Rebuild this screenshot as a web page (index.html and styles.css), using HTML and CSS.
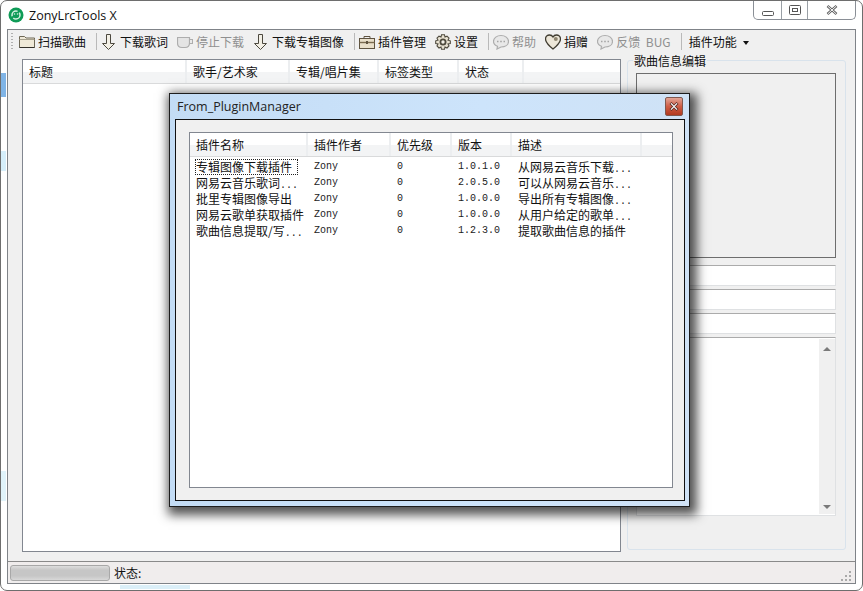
FILE: index.html
```html
<!DOCTYPE html>
<html lang="zh-CN">

<head>
    <meta charset="UTF-8">
    <title>ZonyLrcTools X</title>
    <link rel="stylesheet" href="styles.css">
</head>

<body>
    <div class="janela">
        <div class="titulo">
            <svg class="logo" width="16" height="16" viewBox="0 0 16 16">
                <circle cx="8" cy="8" r="7.5" fill="#0f9b57" />
                <circle cx="8" cy="8" r="4" fill="none" stroke="#d8f2e2" stroke-width="1.5" stroke-dasharray="9 2" />
                <circle cx="6.5" cy="7" r=".8" fill="#d8f2e2" />
                <circle cx="9.5" cy="7" r=".8" fill="#d8f2e2" />
            </svg>
            <span class="titulo-texto">ZonyLrcTools X</span>
            <div class="controles">
                <span class="controle ctl-min"><svg width="12" height="5" viewBox="0 0 12 5">
                        <rect x=".5" y=".5" width="11" height="4" rx="1" fill="#fff" stroke="#555" />
                    </svg></span>
                <span class="controle ctl-max"><svg width="12" height="10" viewBox="0 0 12 10">
                        <rect x=".5" y=".5" width="11" height="9" rx="1" fill="#fff" stroke="#555" />
                        <rect x="3.5" y="3.5" width="5" height="3" fill="#fff" stroke="#555" />
                    </svg></span>
                <span class="controle ctl-fechar"><svg width="12" height="10" viewBox="0 0 12 10">
                        <path d="M1.5 1 L10.5 9 M10.5 1 L1.5 9" stroke="#666" stroke-width="2.6" />
                        <path d="M2 1.3 L10 8.7 M10 1.3 L2 8.7" stroke="#f4f4f4" stroke-width="1" />
                    </svg></span>
            </div>
        </div>

        <div class="cliente">
            <div class="toolbar">
                <span class="grip"></span>
                <span class="item">
                    <svg class="ico" viewBox="0 0 16 16">
                        <path d="M.5 13.5 V2.5 H5.5 L7 4 H15.5 V13.5 Z" fill="#efe9d8" stroke="#6d6755" />
                        <path d="M.5 5.5 H15.5" stroke="#a8a28e" />
                        <path d="M.5 13.5 H15.5" stroke="#33302a" />
                    </svg>
                    扫描歌曲
                </span>
                <span class="sep"></span>
                <span class="item">
                    <svg class="ico" viewBox="0 0 16 16">
                        <path d="M5.5 .5 H9.5 V9.5 H13.5 L7.5 15.5 L1.5 9.5 H5.5 Z" fill="#f3f0e6" stroke="#4c493f" />
                    </svg>
                    下载歌词
                </span>
                <span class="item desativado">
                    <svg class="ico" viewBox="0 0 16 16">
                        <path d="M.5 3.5 H12.5 V9 Q12.5 13.5 8 13.5 H5 Q.5 13.5 .5 9 Z" fill="#e4e4e4" stroke="#adadad" stroke-width="1.2" />
                        <path d="M12.5 5.5 H15.5 V9.5 H12" fill="none" stroke="#adadad" stroke-width="1.2" />
                    </svg>
                    停止下载
                </span>
                <span class="item">
                    <svg class="ico" viewBox="0 0 16 16">
                        <path d="M5.5 .5 H9.5 V9.5 H13.5 L7.5 15.5 L1.5 9.5 H5.5 Z" fill="#f3f0e6" stroke="#4c493f" />
                    </svg>
                    下载专辑图像
                </span>
                <span class="sep"></span>
                <span class="item">
                    <svg class="ico" viewBox="0 0 16 16">
                        <rect x=".5" y="4.5" width="15" height="10" fill="#e9dfca" stroke="#5e5340" />
                        <path d="M.5 8.5 H15.5" stroke="#7a6b50" stroke-width="1.4" />
                        <path d="M5 4.5 V2.5 H11 V4.5" fill="none" stroke="#5e5340" />
                        <rect x="7" y="7" width="2" height="3" fill="#5e5340" />
                    </svg>
                    插件管理
                </span>
                <span class="item">
                    <svg class="ico" viewBox="0 0 16 16">
                        <path d="M6.5 .8 H9.5 L10 3 L12 2.2 L14 4.2 L13 6.2 L15.3 6.8 V9.5 L13 10 L14 12 L12 14 L10 13 L9.5 15.3 H6.5 L6 13 L4 14 L2 12 L3 10 L.7 9.5 V6.8 L3 6.2 L2 4.2 L4 2.2 L6 3 Z" fill="#e8e2d2" stroke="#4f4b3e" stroke-width="1.1" />
                        <circle cx="8" cy="8" r="2.6" fill="#f4f1e8" stroke="#4f4b3e" stroke-width="1.8" />
                    </svg>
                    设置
                </span>
                <span class="sep"></span>
                <span class="item desativado">
                    <svg class="ico" viewBox="0 0 16 16">
                        <path d="M8 1.5 C12 1.5 15.5 3.8 15.5 7.5 C15.5 11 12 13 8 13 L4 15 L4.5 12.3 C2 11.3 .5 9.6 .5 7.5 C.5 3.8 4 1.5 8 1.5 Z" fill="#e8e8e8" stroke="#adadad" stroke-width="1.2" />
                        <path d="M4 7.5 H5.5 M7.2 7.5 H8.8 M10.5 7.5 H12" stroke="#a5a5a5" stroke-width="1.5" />
                    </svg>
                    帮助
                </span>
                <span class="item">
                    <svg class="ico" viewBox="0 0 16 16">
                        <path d="M8 15 C3 11 .5 8 .5 5 C.5 2.5 2.5 1 4.5 1 C6 1 7.3 1.7 8 3 C8.7 1.7 10 1 11.5 1 C13.5 1 15.5 2.5 15.5 5 C15.5 8 13 11 8 15 Z" fill="#ece6d8" stroke="#3f3b30" stroke-width="1.3" />
                        <circle cx="10.8" cy="5" r="2" fill="#8f8671" />
                    </svg>
                    捐赠
                </span>
                <span class="item desativado item-bug">
                    <svg class="ico" viewBox="0 0 16 16">
                        <path d="M8 1.5 C12 1.5 15.5 3.8 15.5 7.5 C15.5 11 12 13 8 13 L4 15 L4.5 12.3 C2 11.3 .5 9.6 .5 7.5 C.5 3.8 4 1.5 8 1.5 Z" fill="#e8e8e8" stroke="#adadad" stroke-width="1.2" />
                        <path d="M4 7.5 H5.5 M7.2 7.5 H8.8 M10.5 7.5 H12" stroke="#a5a5a5" stroke-width="1.5" />
                    </svg>
                    反馈 BUG
                </span>
                <span class="sep"></span>
                <span class="item item-menu">插件功能<span class="seta"></span></span>
            </div>

            <div class="principal">
                <div class="lista lista-musicas">
                    <div class="cabecalho">
                        <span class="col c-titulo">标题</span>
                        <span class="col c-cantor">歌手/艺术家</span>
                        <span class="col c-album">专辑/唱片集</span>
                        <span class="col c-tipo">标签类型</span>
                        <span class="col c-estado">状态</span>
                        <span class="col c-resto"></span>
                    </div>
                </div>

                <div class="grupo">
                    <span class="grupo-legenda">歌曲信息编辑</span>
                    <div class="capa"></div>
                    <div class="campo"></div>
                    <div class="campo"></div>
                    <div class="campo"></div>
                    <div class="letra">
                        <div class="rolagem">
                            <span class="seta-cima"></span>
                            <span class="seta-baixo"></span>
                        </div>
                    </div>
                </div>
            </div>

            <div class="status">
                <div class="progresso"></div>
                <span class="status-texto">状态:</span>
                <svg class="alca" width="12" height="12" viewBox="0 0 12 12">
                    <path d="M8 1h2v2H8zM4 5h2v2H4zM8 5h2v2H8zM0 9h2v2H0zM4 9h2v2H4zM8 9h2v2H8z" fill="#a9a9a9" />
                </svg>
            </div>
        </div>
    </div>

    <div class="dialogo">
        <div class="dialogo-titulo">
            <span>From_PluginManager</span>
            <span class="dialogo-fechar"><svg width="10" height="9" viewBox="0 0 10 9">
                    <path d="M1.5 1 L8.5 8 M8.5 1 L1.5 8" stroke="#5a3028" stroke-width="2.8" />
                    <path d="M2 1.4 L8 7.6 M8 1.4 L2 7.6" stroke="#fff" stroke-width="1.2" />
                </svg></span>
        </div>
        <div class="dialogo-corpo">
            <div class="lista lista-plugins">
                <div class="cabecalho">
                    <span class="col p-nome">插件名称</span>
                    <span class="col p-autor">插件作者</span>
                    <span class="col p-prio">优先级</span>
                    <span class="col p-versao">版本</span>
                    <span class="col p-desc">描述</span>
                    <span class="col p-resto"></span>
                </div>
                <div class="linha">
                    <span class="cel p-nome"><span class="foco">专辑图像下载插件</span></span>
                    <span class="cel p-autor mono">Zony</span>
                    <span class="cel p-prio mono">0</span>
                    <span class="cel p-versao mono">1.0.1.0</span>
                    <span class="cel p-desc">从网易云音乐下载<span class="mono">...</span></span>
                </div>
                <div class="linha">
                    <span class="cel p-nome">网易云音乐歌词<span class="mono">...</span></span>
                    <span class="cel p-autor mono">Zony</span>
                    <span class="cel p-prio mono">0</span>
                    <span class="cel p-versao mono">2.0.5.0</span>
                    <span class="cel p-desc">可以从网易云音乐<span class="mono">...</span></span>
                </div>
                <div class="linha">
                    <span class="cel p-nome">批里专辑图像导出</span>
                    <span class="cel p-autor mono">Zony</span>
                    <span class="cel p-prio mono">0</span>
                    <span class="cel p-versao mono">1.0.0.0</span>
                    <span class="cel p-desc">导出所有专辑图像<span class="mono">...</span></span>
                </div>
                <div class="linha">
                    <span class="cel p-nome">网易云歌单获取插件</span>
                    <span class="cel p-autor mono">Zony</span>
                    <span class="cel p-prio mono">0</span>
                    <span class="cel p-versao mono">1.0.0.0</span>
                    <span class="cel p-desc">从用户给定的歌单<span class="mono">...</span></span>
                </div>
                <div class="linha">
                    <span class="cel p-nome">歌曲信息提取/写<span class="mono">...</span></span>
                    <span class="cel p-autor mono">Zony</span>
                    <span class="cel p-prio mono">0</span>
                    <span class="cel p-versao mono">1.2.3.0</span>
                    <span class="cel p-desc">提取歌曲信息的插件</span>
                </div>
            </div>
        </div>
    </div>
</body>

</html>
```

FILE: styles.css
```css
* {
    box-sizing: border-box;
}

html,
body {
    margin: 0;
    height: 100%;
    overflow: hidden;
}

body {
    position: relative;
    background-color: #fff;
    font-family: "Noto Sans CJK SC", "Noto Sans", sans-serif;
    font-size: 12px;
    color: #111;
}

.janela {
    width: 863px;
    height: 591px;
    padding: 0 6px 6px 6px;
    display: flex;
    flex-direction: column;
    border: 1px solid #6e6e6e;
    border-radius: 7px;
    background-color: #fff;
    background-image:
        linear-gradient(#7fb4e6, #7fb4e6),
        linear-gradient(#d5eefa, #d5eefa),
        linear-gradient(#e0f3fa, #e0f3fa),
        linear-gradient(#dbeff8, #dbeff8);
    background-repeat: no-repeat;
    background-size: 5px 24px, 5px 20px, 5px 30px, 70px 4px;
    background-position: 0 72px, 0 150px, 0 470px, 119px 584px;
}

.titulo {
    height: 28px;
    display: flex;
    align-items: center;
    flex-shrink: 0;
}

.logo {
    margin-left: 1px;
}

.titulo-texto {
    margin-left: 5px;
    font-family: "Open Sans", sans-serif;
    font-size: 12.5px;
    color: #111;
}

.controles {
    margin-left: auto;
    margin-top: -9px;
    height: 19px;
    display: flex;
    border: 1px solid #8a8f96;
    border-top: none;
    border-radius: 0 0 5px 5px;
    background-color: #fff;
}

.controle {
    height: 18px;
    display: flex;
    align-items: center;
    justify-content: center;
    border-right: 1px solid #9aa0a6;
}

.ctl-min {
    width: 28px;
}

.ctl-min svg {
    margin-top: 7px;
}

.ctl-max {
    width: 26px;
}

.ctl-fechar {
    width: 47px;
    border-right: none;
}

.cliente {
    flex: 1;
    min-height: 0;
    display: flex;
    flex-direction: column;
    border: 1px solid #7f8388;
    background-color: #f0f0f0;
}

.toolbar {
    height: 23px;
    flex-shrink: 0;
    display: flex;
    align-items: center;
    padding-left: 3px;
    background-color: #f0f0f0;
    white-space: nowrap;
}

.grip {
    width: 2px;
    height: 17px;
    margin-right: 1px;
    background-image: linear-gradient(#b0b0b0 50%, transparent 50%);
    background-size: 2px 3px;
}

.item {
    display: flex;
    align-items: center;
    padding: 0 4px 0 5px;
}

.ico {
    width: 16px;
    height: 16px;
    margin-right: 3px;
    flex-shrink: 0;
}

.desativado {
    color: #8f8f8f;
}

.item-bug {
    word-spacing: 3px;
}

.sep {
    width: 1px;
    height: 17px;
    margin: 0 -1px 0 6px;
    background-color: #b9b9b9;
}

.item-menu {
    padding-left: 8px;
}

.seta {
    width: 0;
    height: 0;
    margin-left: 6px;
    margin-top: 2px;
    border-left: 3.5px solid transparent;
    border-right: 3.5px solid transparent;
    border-top: 4px solid #111;
}

.principal {
    flex: 1;
    min-height: 0;
    display: flex;
    padding: 6px 0 9px 14px;
}

.lista {
    background-color: #fff;
    border: 1px solid #828790;
}

.lista-musicas {
    width: 599px;
}

.cabecalho {
    display: flex;
    height: 24px;
    border-bottom: 1px solid #d9dadb;
    background-image: linear-gradient(#fff 50%, #f3f4f5 50%);
}

.col {
    display: flex;
    align-items: center;
    padding-left: 6px;
    border-right: 2px solid #eceef0;
    overflow: hidden;
}

.c-titulo {
    width: 164px;
}

.c-cantor {
    width: 103px;
}

.c-album {
    width: 89px;
}

.c-tipo {
    width: 80px;
}

.c-estado {
    width: 65px;
}

.c-resto {
    flex: 1;
    border-right: none;
}

.grupo {
    position: relative;
    width: 219px;
    margin-left: 6px;
    padding: 12px 9px 0 9px;
    margin-top: 1px;
    margin-bottom: 2px;
    display: flex;
    flex-direction: column;
    align-items: flex-end;
    border: 1px solid #d9e3ec;
    border-radius: 3px;
}

.grupo-legenda {
    position: absolute;
    top: -9px;
    left: 5px;
    padding: 0 1px;
    background-color: #f0f0f0;
}

.capa {
    width: 200px;
    height: 185px;
    margin-bottom: 7px;
    border: 1px solid #6d6d6d;
}

.campo {
    width: 200px;
    height: 21px;
    margin-bottom: 3px;
    background-color: #fff;
    border: 1px solid #dfe1e3;
    border-top-color: #ababab;
}

.letra {
    width: 200px;
    height: 179px;
    display: flex;
    justify-content: flex-end;
    background-color: #fff;
    border: 1px solid #dfe1e3;
    border-top-color: #ababab;
}

.rolagem {
    width: 16px;
    margin: 1px 0;
    display: flex;
    flex-direction: column;
    justify-content: space-between;
    align-items: center;
    padding: 8px 0 5px;
    background-color: #f0f0f0;
}

.seta-cima {
    width: 0;
    height: 0;
    border-left: 4px solid transparent;
    border-right: 4px solid transparent;
    border-bottom: 4px solid #7a7a7a;
}

.seta-baixo {
    width: 0;
    height: 0;
    border-left: 4px solid transparent;
    border-right: 4px solid transparent;
    border-top: 4px solid #7a7a7a;
}

.status {
    height: 22px;
    flex-shrink: 0;
    display: flex;
    align-items: center;
    padding-left: 2px;
    border-top: 1px solid #8a8a8a;
    background-color: #f0eded;
}

.progresso {
    width: 100px;
    height: 16px;
    border: 1px solid #a8a8a8;
    border-radius: 3px;
    background-image: linear-gradient(#dedede, #c6c6c6 30%, #c6c6c6 70%, #d8d8d8);
}

.status-texto {
    margin-left: 4px;
}

.alca {
    margin-left: auto;
    margin-right: 2px;
    margin-top: 6px;
}

.dialogo {
    position: absolute;
    left: 169px;
    top: 93px;
    width: 521px;
    height: 414px;
    padding: 0 4px 5px 5px;
    display: flex;
    flex-direction: column;
    border: 1px solid #1d1d1d;
    background-image: linear-gradient(90deg, #c3dcf5, #cde4fb 60%, #cfe2f6);
    background-color: #bcdcf8;
    box-shadow: 3px 4px 10px 4px rgba(0, 0, 0, .68);
}

.dialogo-titulo {
    height: 25px;
    flex-shrink: 0;
    display: flex;
    align-items: center;
    justify-content: space-between;
    padding-left: 2px;
    font-family: "Open Sans", sans-serif;
    font-size: 12.5px;
    color: #222;
}

.dialogo-fechar {
    width: 18px;
    height: 19px;
    margin-right: 2px;
    display: flex;
    align-items: center;
    justify-content: center;
    border: 1px solid #80584f;
    border-radius: 2px;
    background-image: linear-gradient(#e2a596, #cf5d45 50%, #b23a20);
}

.dialogo-corpo {
    flex: 1;
    min-height: 0;
    padding: 12px 11px 12px 13px;
    border: 1px solid #111;
    background-color: #f0f0f0;
}

.lista-plugins {
    height: 100%;
}

.p-nome {
    width: 118px;
}

.p-autor {
    width: 83px;
}

.p-prio {
    width: 61px;
}

.p-versao {
    width: 60px;
}

.p-desc {
    width: 130px;
}

.p-resto {
    flex: 1;
    border-right: none;
}

.linha {
    display: flex;
    height: 16px;
    line-height: 16px;
    white-space: nowrap;
}

.cel {
    display: block;
    padding-left: 6px;
}

.cabecalho + .linha {
    margin-top: 2px;
}

.foco {
    display: inline-block;
    height: 16px;
    line-height: 15px;
    margin-left: -1px;
    padding: 0 6px 0 1px;
    outline: 1px dotted #222;
    outline-offset: -1px;
}

.mono {
    font-family: "Liberation Mono", monospace;
    font-size: 10px;
    color: #222;
}
```
